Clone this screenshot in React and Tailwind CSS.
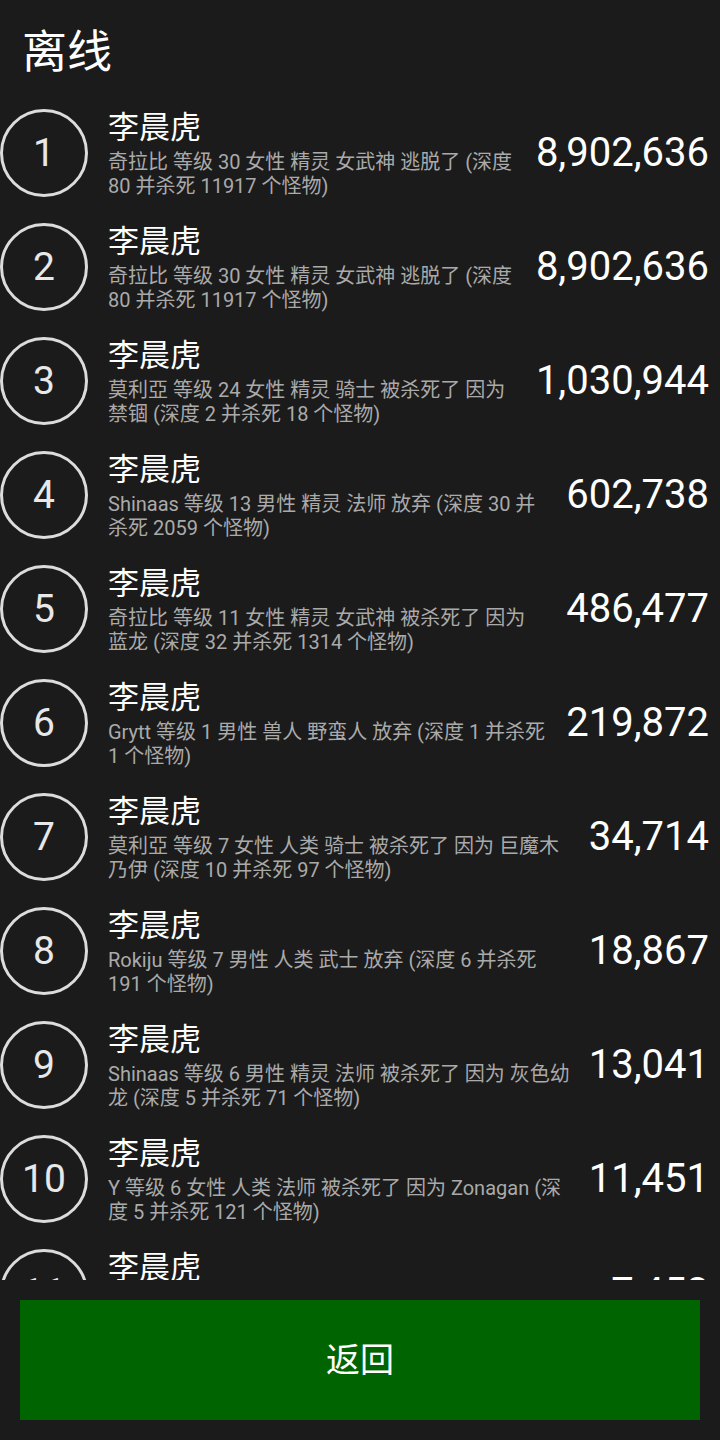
import React from "react";

const rows = [
  ["奇拉比 等级 30 女性 精灵 女武神 逃脱了 (深度", "80 并杀死 11917 个怪物)", "8,902,636"],
  ["奇拉比 等级 30 女性 精灵 女武神 逃脱了 (深度", "80 并杀死 11917 个怪物)", "8,902,636"],
  ["莫利亞 等级 24 女性 精灵 骑士 被杀死了 因为", "禁锢 (深度 2 并杀死 18 个怪物)", "1,030,944"],
  ["Shinaas 等级 13 男性 精灵 法师 放弃 (深度 30 并", "杀死 2059 个怪物)", "602,738"],
  ["奇拉比 等级 11 女性 精灵 女武神 被杀死了 因为", "蓝龙 (深度 32 并杀死 1314 个怪物)", "486,477"],
  ["Grytt 等级 1 男性 兽人 野蛮人 放弃 (深度 1 并杀死", "1 个怪物)", "219,872"],
  ["莫利亞 等级 7 女性 人类 骑士 被杀死了 因为 巨魔木", "乃伊 (深度 10 并杀死 97 个怪物)", "34,714"],
  ["Rokiju 等级 7 男性 人类 武士 放弃 (深度 6 并杀死", "191 个怪物)", "18,867"],
  ["Shinaas 等级 6 男性 精灵 法师 被杀死了 因为 灰色幼", "龙 (深度 5 并杀死 71 个怪物)", "13,041"],
  ["Y 等级 6 女性 人类 法师 被杀死了 因为 Zonagan (深", "度 5 并杀死 121 个怪物)", "11,451"],
  ["Shinaas 等级 5 男性 精灵 法师 被杀死了 因为", "(深度 4 并杀死 60 个怪物)", "7,453"],
];

export default function App() {
  return (
    <div className="h-[1440px] w-[720px] flex flex-col bg-[#1b1b1b] text-white font-['Roboto','Noto_Sans_CJK_SC',sans-serif] overflow-hidden">
      <div className="h-[96px] shrink-0 pl-[22px] pt-[25px] text-[45px] leading-[56px]">离线</div>
      <div className="flex-1 min-h-0 overflow-hidden">
        {rows.map((r, i) => (
          <div key={i} className="h-[114px] flex items-center pr-[11px]">
            <div className="w-[88px] h-[88px] shrink-0 rounded-full border-[3px] border-[#dcdcdc] flex items-center justify-center text-[39px] text-[#e8e8e8]">
              {i + 1}
            </div>
            <div className="flex-1 min-w-0 ml-[20px]">
              <div className="text-[31px] leading-[40px] whitespace-nowrap">李晨虎</div>
              <div className="mt-[2px] text-[20px] leading-[24px] text-[#aaaaaa] whitespace-nowrap">
                <div>{r[0]}</div>
                <div>{r[1]}</div>
              </div>
            </div>
            <div className="shrink-0 text-[40px] leading-[48px] whitespace-nowrap">{r[2]}</div>
          </div>
        ))}
      </div>
      <div className="shrink-0 p-[20px]">
        <div className="h-[120px] bg-[#006400] flex items-center justify-center text-[34px]">返回</div>
      </div>
    </div>
  );
}
